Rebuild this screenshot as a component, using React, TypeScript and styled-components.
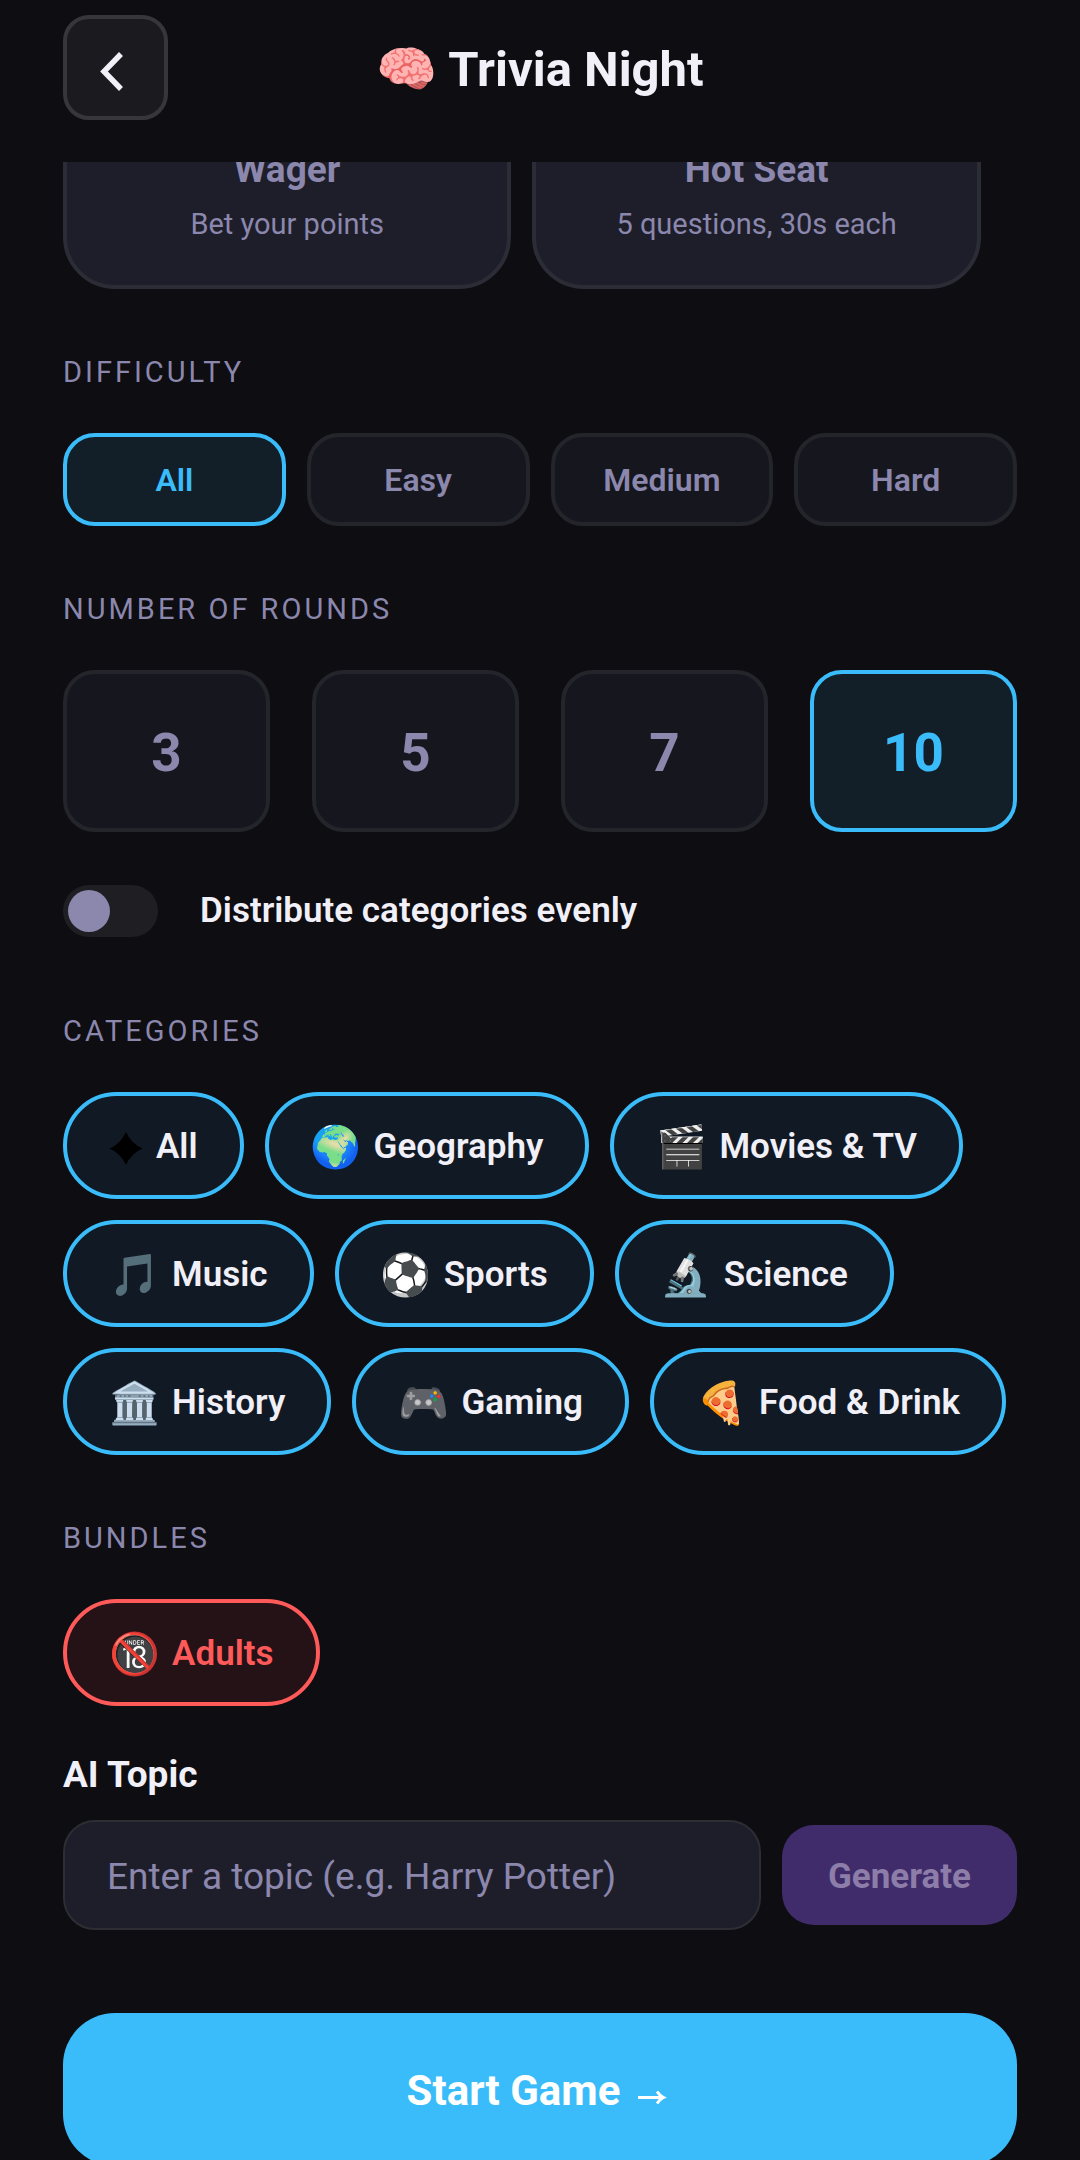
import React, { useLayoutEffect, useRef, useState } from "react";
import styled, { createGlobalStyle, css } from "styled-components";

const c = {
  bg: "#0d0d12",
  surface: "#1e1e2a",
  control: "#16161f",
  line: "#24242b",
  lineStrong: "#2c2c37",
  muted: "#8b87ad",
  text: "#f1f0f8",
  accent: "#3abcfb",
  accentDim: "#131f28",
  chip: "#111a24",
  danger: "#ff5a5a",
  dangerDim: "#241216",
};

const GlobalStyle = createGlobalStyle`
  *, *::before, *::after { box-sizing: border-box; }
  body { margin: 0; background: ${c.bg}; }
  button, input { font: inherit; color: inherit; margin: 0; }
  button { cursor: pointer; }
`;

const Screen = styled.div`
  height: 100vh;
  display: flex;
  flex-direction: column;
  background: ${c.bg};
  color: ${c.text};
  font-family: Roboto, "Noto Color Emoji", "DejaVu Sans", sans-serif;
  font-size: 35px;
`;

const Header = styled.header`
  flex: none;
  display: grid;
  grid-template-columns: 105px 1fr 105px;
  align-items: center;
  padding: 15px 63px 42px;
`;

const BackButton = styled.button`
  display: grid;
  place-items: center;
  width: 105px;
  height: 105px;
  padding: 0;
  border: 4px solid #37363b;
  border-radius: 26px;
  background: #1a1a1f;
`;

const Title = styled.h1`
  margin: 0;
  padding-top: 3px;
  font-size: 49px;
  font-weight: 700;
  text-align: center;
`;

const Content = styled.main`
  flex: 1;
  min-height: 0;
  padding: 0 63px 63px;
  overflow-y: auto;
  scrollbar-width: none;
`;

const ModeGrid = styled.div`
  display: grid;
  grid-template-columns: 47% 47%;
  gap: 21px;
`;

const ModeCard = styled.button`
  display: flex;
  flex-direction: column;
  align-items: center;
  gap: 16px;
  padding: 79px 20px 44px;
  border: 4px solid ${c.lineStrong};
  border-radius: 52px;
  background: ${c.surface};
  color: ${c.muted};
  font-size: 29px;
  line-height: 34px;
`;

const ModeName = styled.span`
  font-size: 37px;
  line-height: 42px;
  font-weight: 700;
`;

const Section = styled.section`
  padding-top: 66px;
`;

const SectionLabel = styled.h2`
  margin: 0 0 44px;
  color: ${c.muted};
  font-size: 29px;
  line-height: 34px;
  font-weight: 400;
  letter-spacing: 3px;
  text-transform: uppercase;
`;

const OptionRow = styled.div<{ $gap: number }>`
  display: flex;
  gap: ${(p) => p.$gap}px;
`;

const Option = styled.button<{ $active: boolean; $large?: boolean }>`
  flex: 1 1 0;
  min-width: 0;
  padding: 0;
  height: 93px;
  border: 4px solid ${(p) => (p.$active ? c.accent : c.line)};
  border-radius: 32px;
  background: ${(p) => (p.$active ? c.accentDim : c.control)};
  color: ${(p) => (p.$active ? c.accent : c.muted)};
  font-size: 32px;
  font-weight: 600;
  ${(p) =>
    p.$large &&
    css`
      height: 162px;
      padding-top: 3px;
      font-size: 53px;
      font-weight: 700;
    `}
`;

const ToggleRow = styled.label`
  display: flex;
  align-items: center;
  gap: 42px;
  padding: 53px 0 11px;
  line-height: 52px;
  font-weight: 600;
`;

const Toggle = styled.input`
  appearance: none;
  display: flex;
  align-items: center;
  width: 95px;
  height: 52px;
  padding: 0 5px;
  border-radius: 26px;
  background: #1e1e23;

  &::before {
    content: "";
    width: 42px;
    height: 42px;
    border-radius: 50%;
    background: ${c.muted};
  }

  &:checked {
    justify-content: flex-end;
    background: ${c.accent};
  }
`;

const Chips = styled.div`
  display: flex;
  flex-wrap: wrap;
  gap: 21px;
`;

const Chip = styled.button<{ $danger?: boolean }>`
  display: flex;
  align-items: center;
  gap: 12px;
  height: 107px;
  padding: 2px 42px 0;
  border: 4px solid ${(p) => (p.$danger ? c.danger : c.accent)};
  border-radius: 54px;
  background: ${(p) => (p.$danger ? c.dangerDim : c.chip)};
  color: ${(p) => (p.$danger ? c.danger : c.text)};
  font-size: 35px;
  font-weight: 600;
`;

const Emoji = styled.span`
  font-family: "Noto Color Emoji", sans-serif;
  font-size: 41px;
  line-height: 48px;
`;

const TopicLabel = styled.label`
  display: block;
  padding: 46px 0 22px;
  font-size: 37px;
  line-height: 46px;
  font-weight: 700;
`;

const TopicRow = styled.div`
  display: flex;
  align-items: center;
  gap: 21px;
`;

const TopicInput = styled.input`
  flex: 1;
  min-width: 0;
  height: 110px;
  padding: 2px 42px 0;
  border: 2px solid #2d2d34;
  border-radius: 32px;
  background: ${c.surface};
  font-size: 37px;

  &::placeholder {
    color: ${c.muted};
    opacity: 1;
  }
`;

const GenerateButton = styled.button`
  height: 100px;
  padding: 2px 46px 0;
  border: 0;
  border-radius: 32px;
  background: #412c6b;
  color: #8d7da9;
  font-size: 35px;
  font-weight: 700;
`;

const StartButton = styled.button`
  display: flex;
  align-items: center;
  justify-content: center;
  gap: 10px;
  width: 100%;
  height: 153px;
  margin-top: 83px;
  padding: 2px 0 0;
  border: 0;
  border-radius: 52px;
  background: ${c.accent};
  color: #fff;
  font-size: 42px;
  font-weight: 700;
`;

const StarIcon = () => (
  <svg width="35" height="48" viewBox="0 0 35 48" aria-hidden="true">
    <path d="M17 9 Q22 20.500 33.500 25.500 Q22 30.500 17 42 Q12 30.500 0.500 25.500 Q12 20.500 17 9 Z" fill="#000" />
  </svg>
);

const difficulties = ["All", "Easy", "Medium", "Hard"];
const rounds = [3, 5, 7, 10];
const categories = [
  ["🌍", "Geography"],
  ["🎬", "Movies & TV"],
  ["🎵", "Music"],
  ["⚽", "Sports"],
  ["🔬", "Science"],
  ["🏛️", "History"],
  ["🎮", "Gaming"],
  ["🍕", "Food & Drink"],
];

export default function App() {
  const content = useRef<HTMLElement>(null);
  const [difficulty, setDifficulty] = useState("All");
  const [round, setRound] = useState(10);

  useLayoutEffect(() => {
    if (content.current) content.current.scrollTop = 96;
  }, []);

  return (
    <Screen>
      <GlobalStyle />
      <Header>
        <BackButton aria-label="Back">
          <svg width="34" height="52" viewBox="0 0 34 52" fill="none" stroke="#f1f0f8" strokeWidth="5.5">
            <path d="M22 12 L5 29.500 L22 47" />
          </svg>
        </BackButton>
        <Title>🧠 Trivia Night</Title>
      </Header>
      <Content ref={content}>
        <ModeGrid>
          <ModeCard>
            <ModeName>Wager</ModeName>
            <span>Bet your points</span>
          </ModeCard>
          <ModeCard>
            <ModeName>Hot Seat</ModeName>
            <span>5 questions, 30s each</span>
          </ModeCard>
        </ModeGrid>
        <Section>
          <SectionLabel>Difficulty</SectionLabel>
          <OptionRow $gap={21}>
            {difficulties.map((d) => (
              <Option key={d} $active={d === difficulty} onClick={() => setDifficulty(d)}>
                {d}
              </Option>
            ))}
          </OptionRow>
        </Section>
        <Section>
          <SectionLabel>Number of rounds</SectionLabel>
          <OptionRow $gap={42}>
            {rounds.map((r) => (
              <Option key={r} $large $active={r === round} onClick={() => setRound(r)}>
                {r}
              </Option>
            ))}
          </OptionRow>
          <ToggleRow>
            <Toggle type="checkbox" role="switch" />
            Distribute categories evenly
          </ToggleRow>
        </Section>
        <Section>
          <SectionLabel>Categories</SectionLabel>
          <Chips>
            <Chip>
              <StarIcon />
              All
            </Chip>
            {categories.map(([icon, name]) => (
              <Chip key={name}>
                <Emoji>{icon}</Emoji>
                {name}
              </Chip>
            ))}
          </Chips>
        </Section>
        <Section>
          <SectionLabel>Bundles</SectionLabel>
          <Chips>
            <Chip $danger>
              <Emoji>🔞</Emoji>
              Adults
            </Chip>
          </Chips>
        </Section>
        <TopicLabel htmlFor="topic">AI Topic</TopicLabel>
        <TopicRow>
          <TopicInput id="topic" placeholder="Enter a topic (e.g. Harry Potter)" />
          <GenerateButton>Generate</GenerateButton>
        </TopicRow>
        <StartButton>
          <span>Start Game</span>
          <svg width="43" height="30" viewBox="0 0 43 30" aria-hidden="true">
            <path d="M8 21.500 H33" fill="none" stroke="#fff" strokeWidth="3" />
            <path d="M27 15.500 Q29.500 19.500 33.500 21.500 Q29.500 23.500 27 27.500" fill="none" stroke="#fff" strokeWidth="3" />
          </svg>
        </StartButton>
      </Content>
    </Screen>
  );
}
